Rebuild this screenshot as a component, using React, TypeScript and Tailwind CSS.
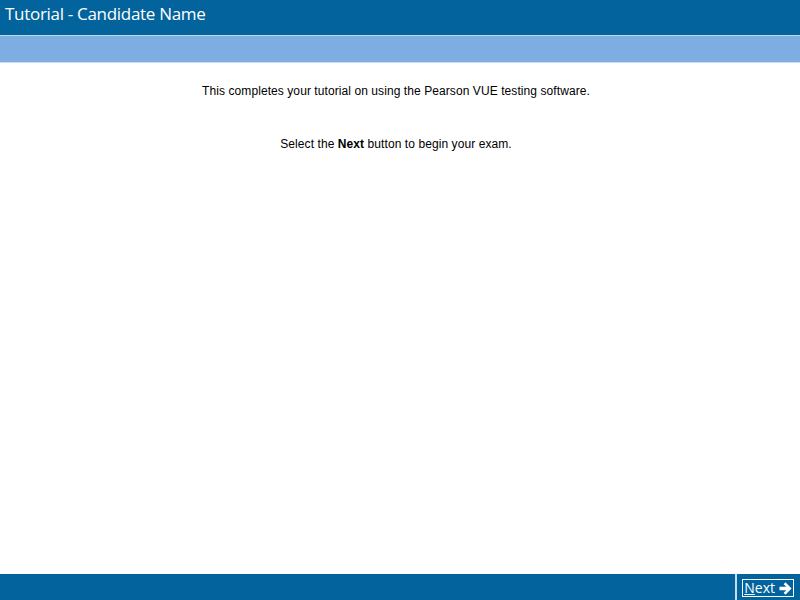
import React from "react";

export default function App() {
  return (
    <div className="w-[800px] h-[600px] flex flex-col bg-white overflow-hidden">
      <div className="h-[35px] bg-[#03639c] flex items-start pt-[3px] pl-[5px]">
        <span
          className="text-white text-[17px] leading-[22px] tracking-[-0.3px]"
          style={{ fontFamily: '"Open Sans", "Noto Sans", sans-serif' }}
        >
          Tutorial - Candidate Name
        </span>
      </div>
      <div className="h-px bg-[#bcd6f0]" />
      <div className="h-[26px] bg-[#7eade1]" />
      <div className="h-px bg-[#c9def3]" />
      <div
        className="flex-1 flex flex-col items-center pr-2 text-[12px] leading-[14px] text-black tracking-[0.08px]"
        style={{ fontFamily: '"Liberation Sans", Arial, sans-serif' }}
      >
        <p className="mt-[21px]">This completes your tutorial on using the Pearson VUE testing software.</p>
        <p className="mt-[39px]">
          Select the <b>Next</b> button to begin your exam.
        </p>
      </div>
      <div className="h-[26px] bg-[#03639c] flex justify-end">
        <div className="border-l-2 border-[#c8dcef] flex items-end pb-[3px] pl-[5px] pr-[6px]">
          <button
            className="flex items-center gap-[4px] border border-white px-[1px] h-[18px] text-white text-[14px] leading-none"
            style={{ fontFamily: '"Open Sans", "Noto Sans", sans-serif' }}
          >
            <span>
              <span className="underline">N</span>ext
            </span>
            <svg width="13" height="13" viewBox="0 0 14 14" fill="white">
              <path d="M0.5 5.2h7.4L5 2.3 7 0.4 13.5 7 7 13.6 5 11.7l2.9-2.9H0.5z" />
            </svg>
          </button>
        </div>
      </div>
    </div>
  );
}
